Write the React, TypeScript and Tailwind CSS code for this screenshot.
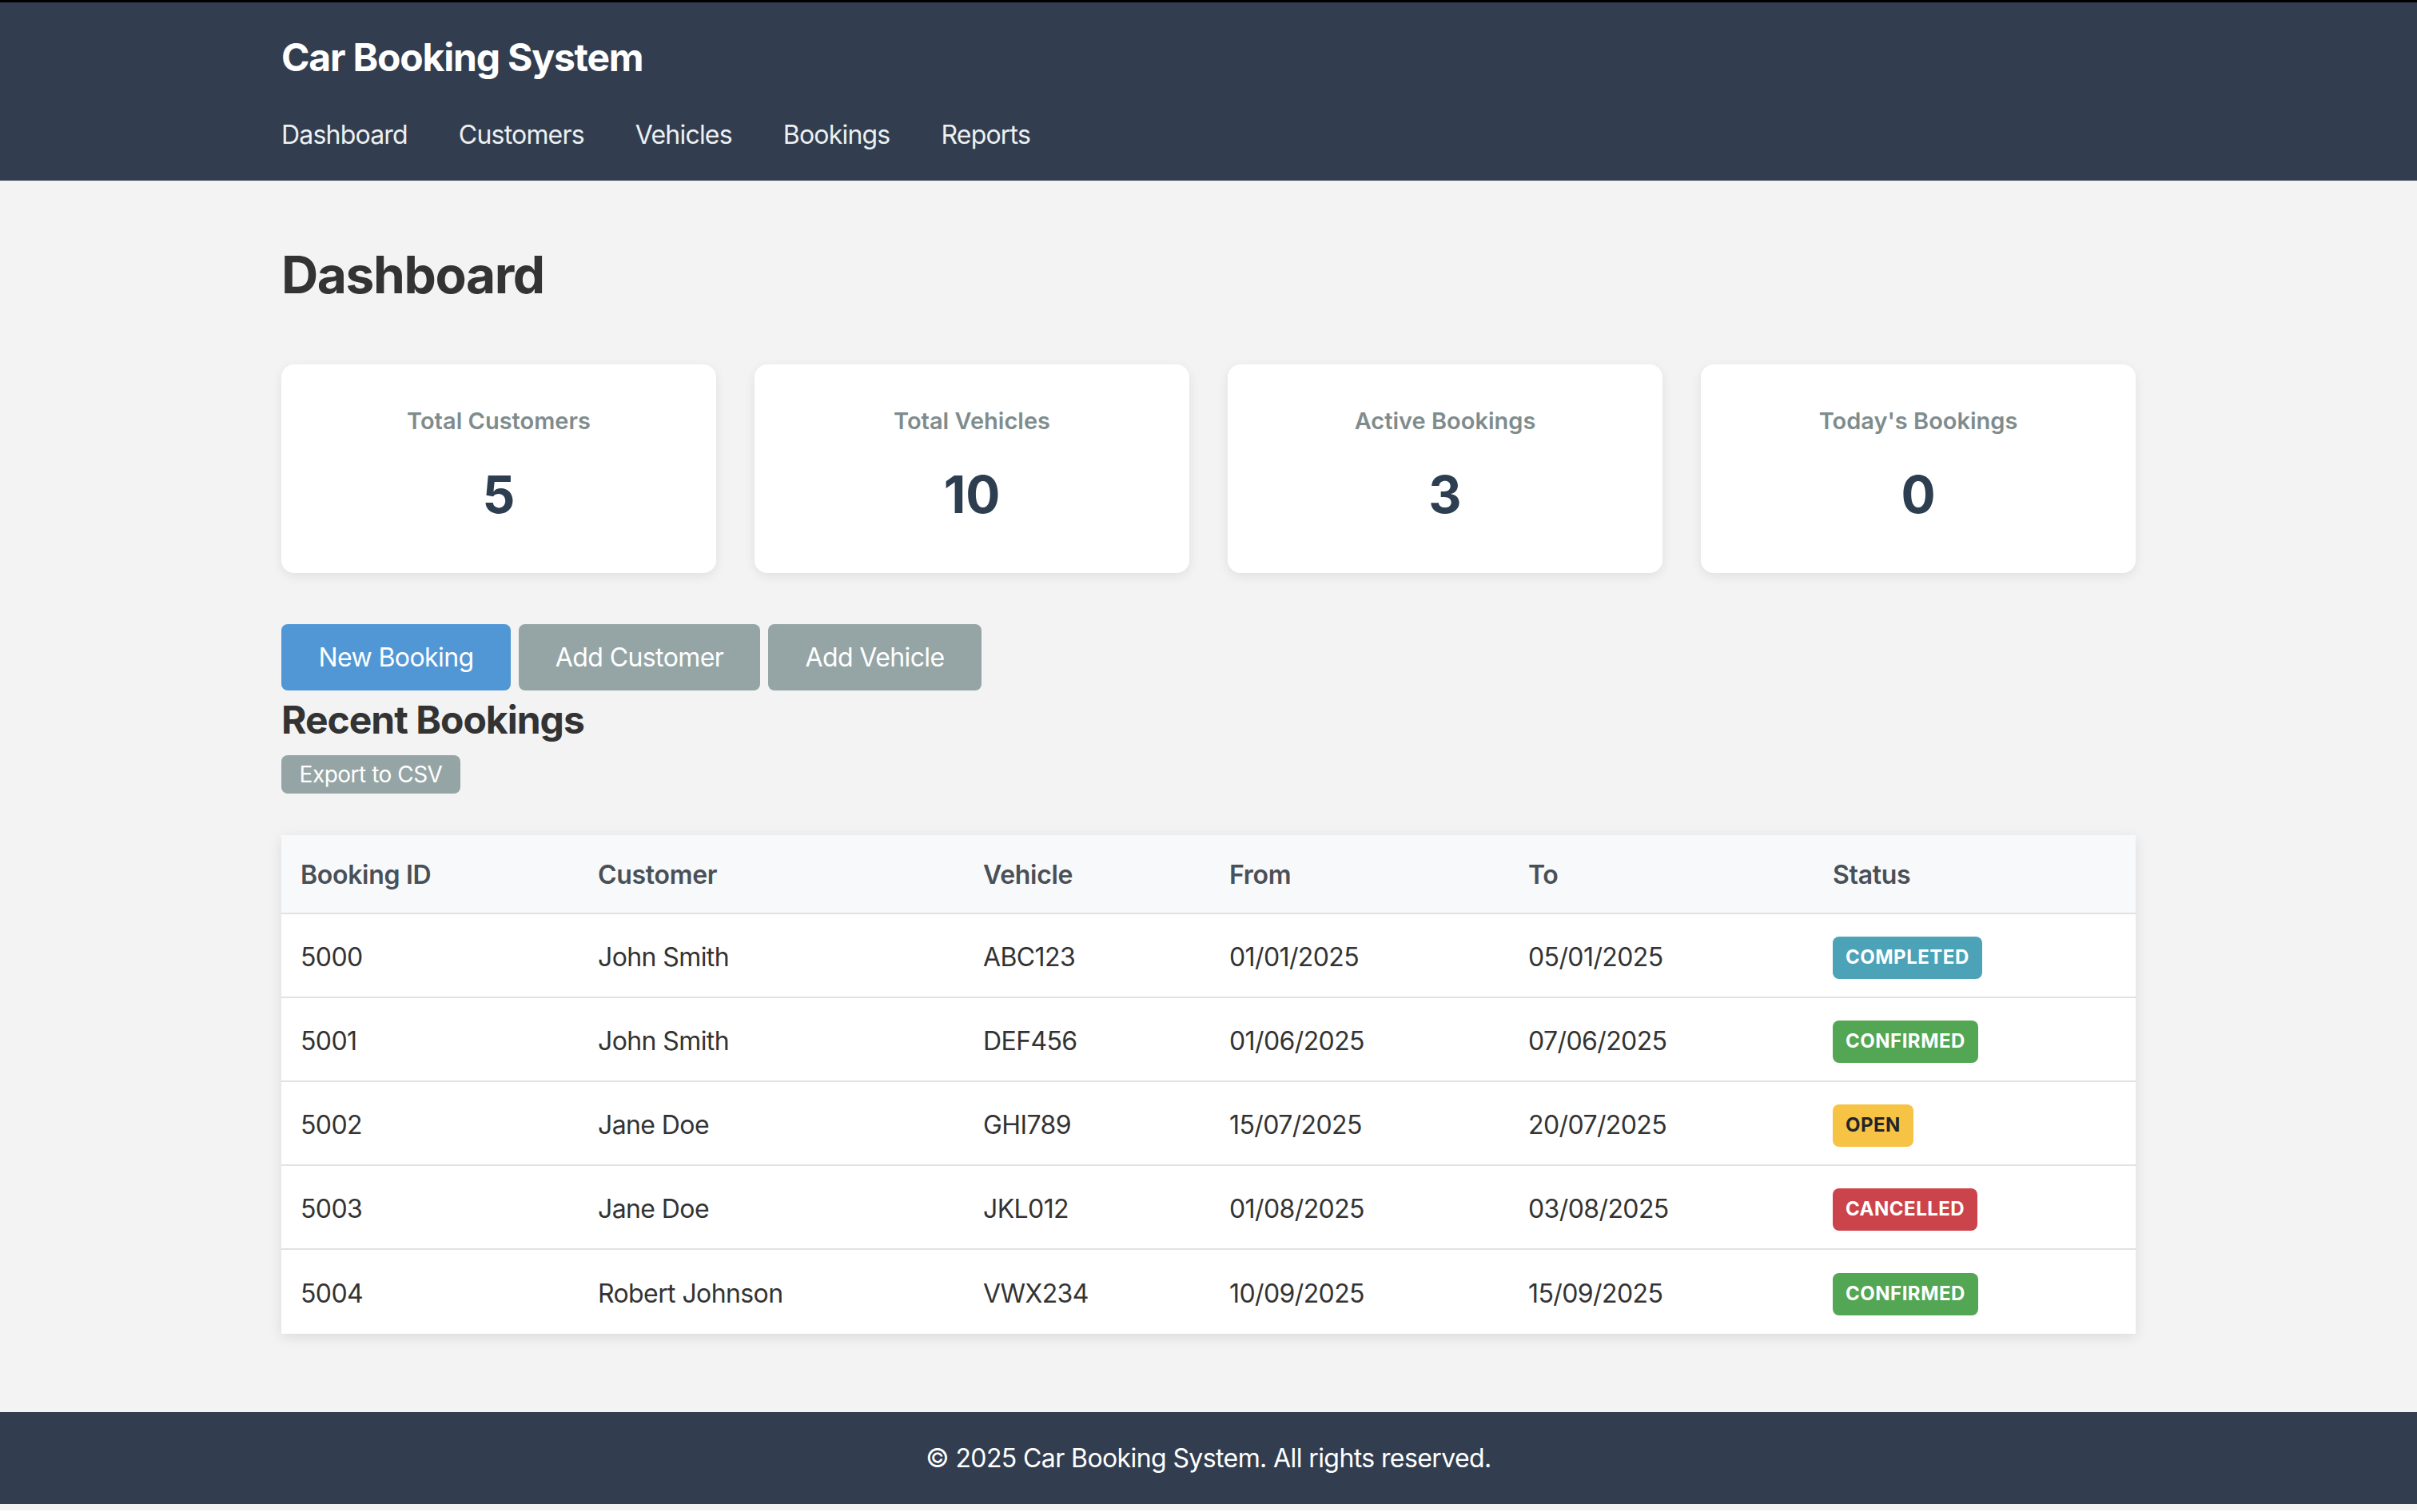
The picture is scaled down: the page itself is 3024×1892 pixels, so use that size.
import React from "react";

type Status = "COMPLETED" | "CONFIRMED" | "OPEN" | "CANCELLED";

const rows: { id: string; customer: string; vehicle: string; from: string; to: string; status: Status }[] = [
  { id: "5000", customer: "John Smith", vehicle: "ABC123", from: "01/01/2025", to: "05/01/2025", status: "COMPLETED" },
  { id: "5001", customer: "John Smith", vehicle: "DEF456", from: "01/06/2025", to: "07/06/2025", status: "CONFIRMED" },
  { id: "5002", customer: "Jane Doe", vehicle: "GHI789", from: "15/07/2025", to: "20/07/2025", status: "OPEN" },
  { id: "5003", customer: "Jane Doe", vehicle: "JKL012", from: "01/08/2025", to: "03/08/2025", status: "CANCELLED" },
  { id: "5004", customer: "Robert Johnson", vehicle: "VWX234", from: "10/09/2025", to: "15/09/2025", status: "CONFIRMED" },
];

function Badge({ status }: { status: Status }) {
  const cls =
    status === "COMPLETED"
      ? "bg-[#4ca2b7] text-white"
      : status === "CONFIRMED"
      ? "bg-[#53a653] text-white"
      : status === "OPEN"
      ? "bg-[#f6c344] text-[#212529]"
      : "bg-[#cc444b] text-white";
  return (
    <span className={`inline-flex h-[53px] items-center rounded-[8px] px-[16px] text-[24px] font-bold tracking-[0.5px] ${cls}`}>
      {status}
    </span>
  );
}

const stats = [
  { label: "Total Customers", value: "5" },
  { label: "Total Vehicles", value: "10" },
  { label: "Active Bookings", value: "3" },
  { label: "Today's Bookings", value: "0" },
];

const gridCols = "grid grid-cols-[372px_482px_308px_374px_381px_403px]";

export default function App() {
  return (
    <div className="bg-[#f3f3f3] pb-[8px] font-[Inter,sans-serif]">
      <div className="h-[3px] bg-black" />
      <header className="h-[223px] bg-[#323e50]">
        <div className="mx-auto w-[2320px] pt-[40px]">
          <h1 className="text-[48px] font-bold leading-[58px] tracking-[-1.2px] text-white">Car Booking System</h1>
          <nav className="mt-[49px] flex gap-[64px] text-[32px] leading-[38px] tracking-[-0.8px] text-[#ecf0f1]">
            <a>Dashboard</a>
            <a>Customers</a>
            <a>Vehicles</a>
            <a>Bookings</a>
            <a>Reports</a>
          </nav>
        </div>
      </header>

      <main className="mx-auto w-[2320px] pb-[98px] pt-[79px]">
        <h1 className="text-[64px] font-bold leading-[77px] tracking-[-1.4px] text-[#333333]">Dashboard</h1>

        <div className="mt-[74px] grid grid-cols-4 gap-[48px]">
          {stats.map((s) => (
            <div
              key={s.label}
              className="flex h-[261px] flex-col items-center rounded-[16px] bg-white pt-[54px] shadow-[0_4px_14px_rgba(0,0,0,0.08)]"
            >
              <div className="text-[29px] font-semibold leading-[34px] text-[#7f8c8d]">{s.label}</div>
              <div className="mt-[36px] text-[64px] font-bold leading-[77px] text-[#2c3e50]">{s.value}</div>
            </div>
          ))}
        </div>

        <div className="mt-[64px] flex gap-[10px]">
          <button className="flex h-[83px] w-[287px] items-center justify-center rounded-[8px] bg-[#5197d6] text-[32px] tracking-[-0.6px] text-white">
            New Booking
          </button>
          <button className="flex h-[83px] w-[302px] items-center justify-center rounded-[8px] bg-[#95a5a6] text-[32px] tracking-[-0.6px] text-white">
            Add Customer
          </button>
          <button className="flex h-[83px] w-[267px] items-center justify-center rounded-[8px] bg-[#95a5a6] text-[32px] tracking-[-0.6px] text-white">
            Add Vehicle
          </button>
        </div>

        <h2 className="mt-[8px] text-[48px] font-bold leading-[58px] tracking-[-1px] text-[#333333]">Recent Bookings</h2>
        <button className="mt-[15px] flex h-[48px] w-[224px] items-center justify-center rounded-[8px] bg-[#95a5a6] text-[28px] tracking-[-0.5px] text-white">
          Export to CSV
        </button>

        <div className="mt-[52px] bg-white shadow-[0_4px_16px_rgba(0,0,0,0.1)]">
          <div className={`${gridCols} h-[99px] items-center border-b-2 border-[#dee2e6] bg-[#f8f9fa] pt-[2px] text-[32px] font-semibold tracking-[-0.3px] text-[#495057]`}>
            <div className="pl-[24px]">Booking ID</div>
            <div className="pl-[24px]">Customer</div>
            <div className="pl-[24px]">Vehicle</div>
            <div className="pl-[24px]">From</div>
            <div className="pl-[24px]">To</div>
            <div className="pl-[24px]">Status</div>
          </div>
          {rows.map((r, i) => (
            <div
              key={r.id}
              className={`${gridCols} h-[105px] items-center pt-[5px] text-[32px] tracking-[-0.6px] text-[#333333] ${
                i < rows.length - 1 ? "border-b-2 border-[#e2e2e2]" : ""
              }`}
            >
              <div className="pl-[24px]">{r.id}</div>
              <div className="pl-[24px]">{r.customer}</div>
              <div className="pl-[24px]">{r.vehicle}</div>
              <div className="pl-[24px]">{r.from}</div>
              <div className="pl-[24px]">{r.to}</div>
              <div className="pl-[24px]">
                <Badge status={r.status} />
              </div>
            </div>
          ))}
        </div>
      </main>

      <footer className="flex h-[115px] items-center justify-center bg-[#323e50] text-[32px] tracking-[-0.6px] text-white">
        © 2025 Car Booking System. All rights reserved.
      </footer>
    </div>
  );
}
